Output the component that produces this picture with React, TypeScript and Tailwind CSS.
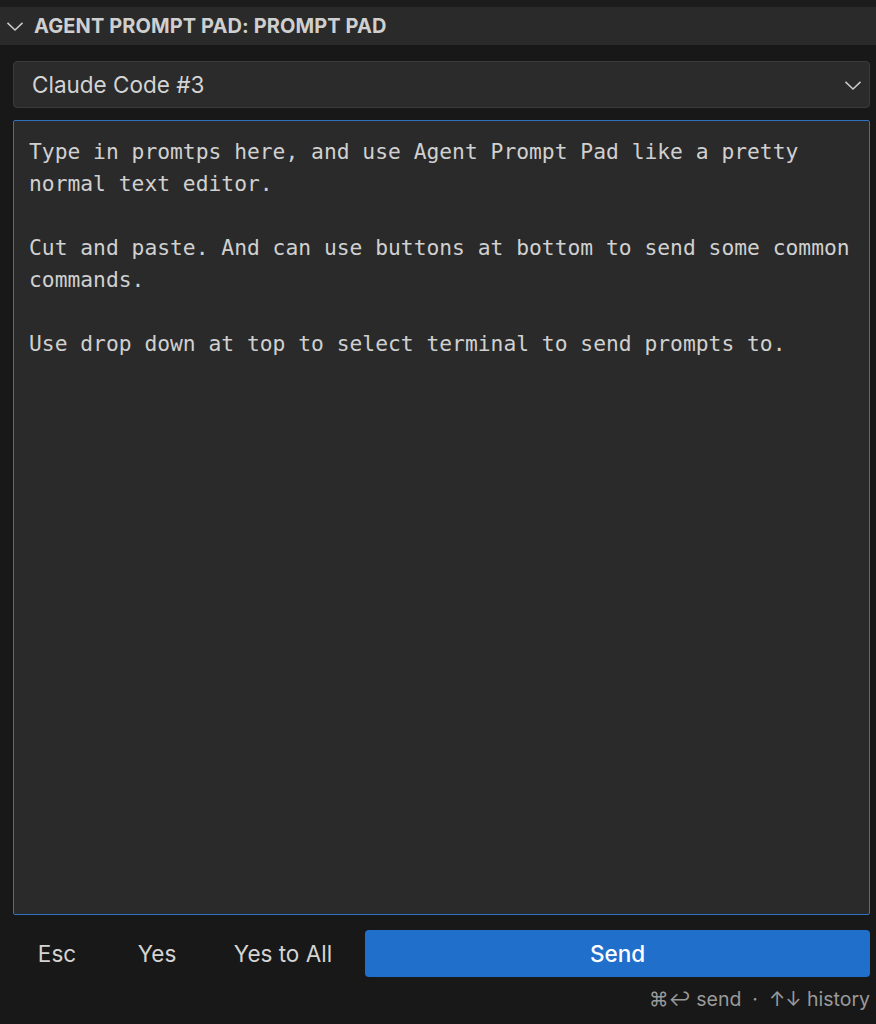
import React, { useState } from 'react';

const sans = { fontFamily: 'Inter, "Liberation Sans", sans-serif' };
const mono = { fontFamily: '"DejaVu Sans Mono", "Liberation Mono", monospace' };

const initialText = `Type in promtps here, and use Agent Prompt Pad like a pretty
normal text editor.

Cut and paste. And can use buttons at bottom to send some common
commands.

Use drop down at top to select terminal to send prompts to.`;

const Chevron = ({ className }: { className?: string }) => (
  <svg viewBox="0 0 16 16" className={className} fill="none" stroke="currentColor" strokeWidth="1.2">
    <path d="M2 5.5 8 11.2 14 5.5" />
  </svg>
);

const App: React.FC = () => {
  const [text, setText] = useState(initialText);
  const [terminal] = useState('Claude Code #3');

  return (
    <div className="w-[876px] h-[1024px] bg-[#181818] flex flex-col overflow-hidden" style={sans}>
      {/* Panel header */}
      <div className="h-[7px] bg-[#1c1c1c]"></div>
      <div className="h-[38px] bg-[#2a2a2a] flex items-center pl-[5px]">
        <Chevron className="w-[20px] h-[20px] text-[#cccccc]" />
        <span className="ml-[9px] text-[20px] font-bold text-[#cfcfcf] tracking-[0.1px]">AGENT PROMPT PAD: PROMPT PAD</span>
      </div>

      <div className="flex-1 flex flex-col pl-[13px] pr-[6px] pt-[16px]">
        {/* Terminal select */}
        <div className="h-[47px] bg-[#2b2b2b] border border-[#3a3a3a] rounded-[4px] flex items-center justify-between pl-[18px] pr-[6px]">
          <span className="text-[22.5px] text-[#d4d4d4]">{terminal}</span>
          <Chevron className="w-[20px] h-[20px] text-[#cccccc]" />
        </div>

        {/* Editor */}
        <textarea
          value={text}
          onChange={(e) => setText(e.target.value)}
          spellCheck={false}
          className="mt-[12px] h-[795px] w-full resize-none bg-[#2a2a2a] border border-[#2f72c0] rounded-[2px] text-[#d0d0d0] text-[21.3px] leading-[32px] pt-[15px] pl-[15px] pr-[10px] outline-none"
          style={mono}
        />

        {/* Buttons */}
        <div className="mt-[15px] flex items-center">
          <button className="w-[88px] h-[47px] text-[22.5px] text-[#d4d4d4]">Esc</button>
          <button className="w-[112px] h-[47px] text-[22.5px] text-[#d4d4d4]">Yes</button>
          <button className="w-[140px] h-[47px] text-[22.5px] text-[#d4d4d4]">Yes to All</button>
          <button className="ml-[12px] flex-1 h-[47px] rounded-[4px] bg-[#1f6fcb] text-white text-[22.5px] font-medium">Send</button>
        </div>

        <div className="mt-[8px] text-right text-[19.5px] text-[#9a9a9a]">
          ⌘↩ send &nbsp;·&nbsp; ↑↓ history
        </div>
      </div>
    </div>
  );
};

export default App;
